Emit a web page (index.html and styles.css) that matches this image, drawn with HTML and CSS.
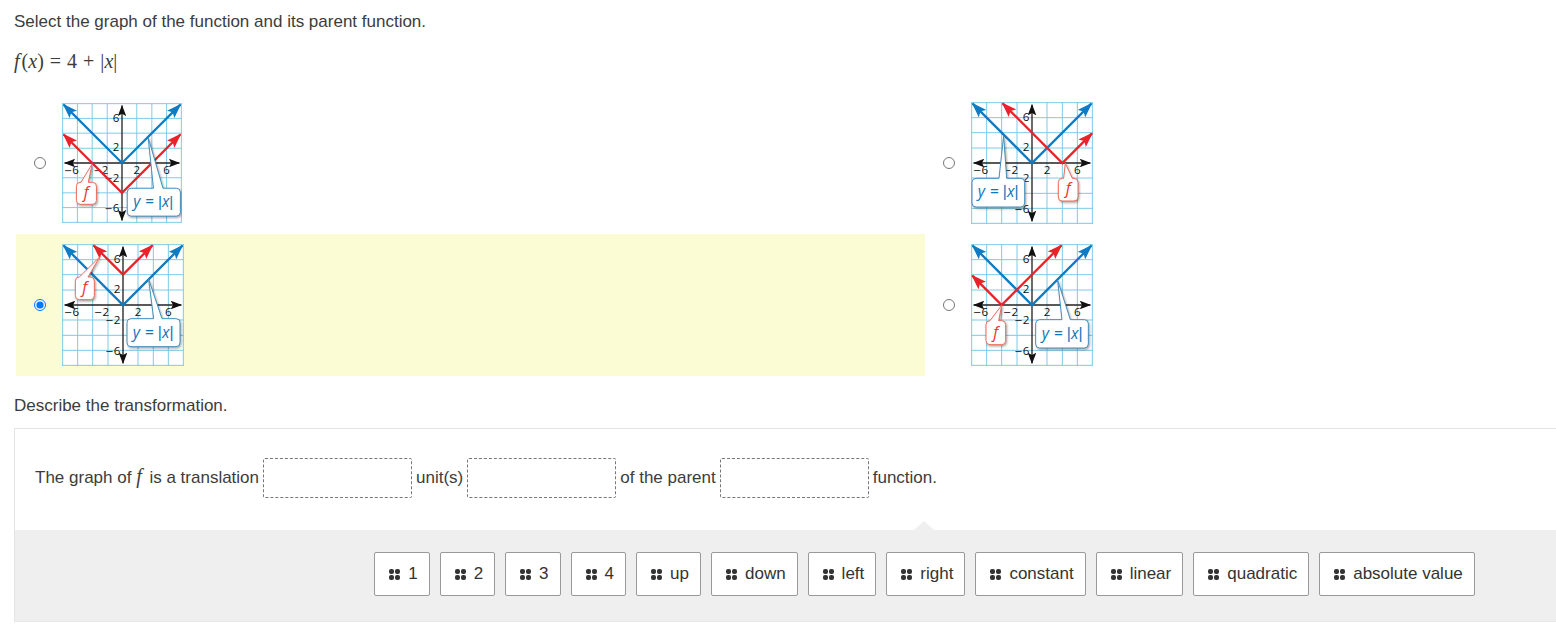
FILE: index.html
```
<!DOCTYPE html>
<html lang="en">
<head>
    <meta charset="UTF-8">
    <meta name="viewport" content="width=device-width, initial-scale=1.0">
    <title>Absolute Value Functions</title>
    <link rel="stylesheet" href="styles.css">
</head>
<body>
    <!-- Shared drawing parts for the graphs -->
    <svg class="defs" width="0" height="0" aria-hidden="true">
        <defs>
            <marker id="arrowBlack" viewBox="0 0 34 26" refX="32" refY="13" markerWidth="34" markerHeight="26" markerUnits="userSpaceOnUse" orient="auto-start-reverse">
                <path d="M0 0 L34 13 L0 26 L7 13 Z" fill="#111"/>
            </marker>
            <marker id="arrowBlue" viewBox="0 0 46 32" refX="42" refY="16" markerWidth="46" markerHeight="32" markerUnits="userSpaceOnUse" orient="auto-start-reverse">
                <path d="M0 0 L46 16 L0 32 L9 16 Z" fill="#0e7cc4"/>
            </marker>
            <marker id="arrowRed" viewBox="0 0 46 32" refX="42" refY="16" markerWidth="46" markerHeight="32" markerUnits="userSpaceOnUse" orient="auto-start-reverse">
                <path d="M0 0 L46 16 L0 32 L9 16 Z" fill="#e8232a"/>
            </marker>
            <symbol id="plane" viewBox="0 0 366 366">
                <rect x="0" y="0" width="366" height="366" fill="#fff"/>
                <path class="grid" d="M2 0V366 M47 0V366 M92 0V366 M138 0V366 M228 0V366 M274 0V366 M319 0V366 M364 0V366 M0 2H366 M0 47H366 M0 92H366 M0 138H366 M0 228H366 M0 274H366 M0 319H366 M0 364H366"/>
                <path class="axis" d="M8 183H358"/>
                <path class="axis" d="M183 8V358"/>
                <text class="tick" x="6" y="216"><tspan class="minus">−</tspan>6</text>
                <text class="tick" x="96" y="216"><tspan class="minus">−</tspan>2</text>
                <text class="tick" x="218" y="216">2</text>
                <text class="tick" x="309" y="216">6</text>
                <text class="tick end" x="175" y="57">6</text>
                <text class="tick end" x="175" y="147">2</text>
                <text class="tick end" x="175" y="240"><tspan class="minus">−</tspan>2</text>
                <text class="tick end" x="175" y="332"><tspan class="minus">−</tspan>6</text>
                <path class="parent-line" d="M5 5L183 183L361 5"/>
            </symbol>
        </defs>
    </svg>

    <main class="question">
        <p class="prompt">Select the graph of the function and its parent function.</p>
        <p class="equation"><i>f</i>(<i>x</i>)<span class="op">=</span>4<span class="op">+</span>|<i>x</i>|</p>

        <form class="choices">
            <div class="choice">
                <input type="radio" id="graphA" name="graph" value="a">
                <label for="graphA">
                    <svg class="graph small" viewBox="0 0 366 366" role="img" aria-label="f shifted down">
                        <use href="#plane"/>
                        <path class="f-line" d="M5 96L183 274L361 96"/>
                        <path class="callout red" d="M54 242H58L92 186L80 242H93Q105 242 105 254V297Q105 309 93 309H56Q44 309 44 297V254Q44 242 56 242Z"/>
                        <text class="callout-text red-text" x="66" y="290">f</text>
                        <path class="callout blue" d="M211 260H279L263 106L308 260H349Q361 260 361 272V333Q361 345 349 345H211Q199 345 199 333V272Q199 260 211 260Z"/>
                        <text class="callout-text blue-text" x="217" y="317">y<tspan class="upright" dx="15">=</tspan><tspan class="bar" dx="12">|</tspan>x<tspan class="bar">|</tspan></text>
                    </svg>
                </label>
            </div>

            <div class="choice">
                <input type="radio" id="graphB" name="graph" value="b">
                <label for="graphB">
                    <svg class="graph" viewBox="0 0 366 366" role="img" aria-label="f shifted right">
                        <use href="#plane"/>
                        <path class="f-line" d="M95 4L274 183L363 94"/>
                        <path class="callout red" d="M274 229H278L283 184L304 229H309Q321 229 321 241V285Q321 297 309 297H274Q262 297 262 285V241Q262 229 274 229Z"/>
                        <text class="callout-text red-text" x="284" y="277">f</text>
                        <path class="callout blue" d="M15 229H84L98 102L107 229H149Q161 229 161 241V303Q161 315 149 315H15Q3 315 3 303V241Q3 229 15 229Z"/>
                        <text class="callout-text blue-text" x="20" y="286">y<tspan class="upright" dx="15">=</tspan><tspan class="bar" dx="12">|</tspan>x<tspan class="bar">|</tspan></text>
                    </svg>
                </label>
            </div>

            <div class="choice">
                <input type="radio" id="graphC" name="graph" value="c" checked>
                <label for="graphC">
                    <svg class="graph" viewBox="0 0 366 366" role="img" aria-label="f shifted up">
                        <use href="#plane"/>
                        <path class="f-line" d="M95 4L183 92L271 4"/>
                        <path class="callout red" d="M52 99L113 39L78 99H85Q97 99 97 111V155Q97 167 85 167H52Q40 167 40 155V111Q40 99 52 99Z"/>
                        <text class="callout-text red-text" x="61" y="147">f</text>
                        <path class="callout blue" d="M207 224H275L260 106L300 224H342Q354 224 354 236V296Q354 308 342 308H207Q195 308 195 296V236Q195 224 207 224Z"/>
                        <text class="callout-text blue-text" x="212" y="281">y<tspan class="upright" dx="15">=</tspan><tspan class="bar" dx="12">|</tspan>x<tspan class="bar">|</tspan></text>
                    </svg>
                </label>
            </div>

            <div class="choice">
                <input type="radio" id="graphD" name="graph" value="d">
                <label for="graphD">
                    <svg class="graph" viewBox="0 0 366 366" role="img" aria-label="f shifted left">
                        <use href="#plane"/>
                        <path class="f-line" d="M4 95L92 183L271 4"/>
                        <path class="callout red" d="M57 230L92 184L83 230H92Q104 230 104 242V290Q104 302 92 302H57Q45 302 45 290V242Q45 230 57 230Z"/>
                        <text class="callout-text red-text" x="67" y="281">f</text>
                        <path class="callout blue" d="M206 227H273L260 109L298 227H340Q352 227 352 239V300Q352 312 340 312H206Q194 312 194 300V239Q194 227 206 227Z"/>
                        <text class="callout-text blue-text" x="212" y="285">y<tspan class="upright" dx="15">=</tspan><tspan class="bar" dx="12">|</tspan>x<tspan class="bar">|</tspan></text>
                    </svg>
                </label>
            </div>
        </form>

        <p class="prompt">Describe the transformation.</p>

        <section class="cloze">
            <div class="sentence">
                <span>The graph of <i class="math">f</i> is a translation</span>
                <span class="slot"></span>
                <span>unit(s)</span>
                <span class="slot"></span>
                <span>of the parent</span>
                <span class="slot"></span>
                <span>function.</span>
            </div>

            <!-- Draggable answers -->
            <div class="bank">
                <button type="button" draggable="true"><span class="grip"></span>1</button>
                <button type="button" draggable="true"><span class="grip"></span>2</button>
                <button type="button" draggable="true"><span class="grip"></span>3</button>
                <button type="button" draggable="true"><span class="grip"></span>4</button>
                <button type="button" draggable="true"><span class="grip"></span>up</button>
                <button type="button" draggable="true"><span class="grip"></span>down</button>
                <button type="button" draggable="true"><span class="grip"></span>left</button>
                <button type="button" draggable="true"><span class="grip"></span>right</button>
                <button type="button" draggable="true"><span class="grip"></span>constant</button>
                <button type="button" draggable="true"><span class="grip"></span>linear</button>
                <button type="button" draggable="true"><span class="grip"></span>quadratic</button>
                <button type="button" draggable="true"><span class="grip"></span>absolute value</button>
            </div>
        </section>
    </main>
</body>
</html>
```
FILE: styles.css
```
* {
    box-sizing: border-box;
}

body {
    margin: 0;
    font-family: "Liberation Sans", Arial, sans-serif;
    font-size: 17px;
    line-height: 20px;
    color: #3c3c3c;
    background-color: #fff;
}

.defs {
    position: absolute;
}

.question {
    padding: 12px 0 0 14px;
}

.prompt {
    margin: 0;
}

.equation {
    margin: 18px 0 20px;
    font-family: "Liberation Serif", "Times New Roman", serif;
    font-size: 20px;
    line-height: 22px;
}

.equation i:first-child {
    margin-right: 2px;
}

.op {
    margin: 0 6px;
}

/* Graph choices */
.choices {
    display: grid;
    grid-template-columns: 59fr 41fr;
    margin: 0 0 20px 2px;
}

.choice {
    display: flex;
    align-items: center;
    gap: 16px;
    height: 142px;
    padding-left: 18px;
}

.choice:has(input:checked) {
    background-color: #fcfcd4;
}

.choice input {
    width: 12px;
    height: 12px;
    margin: 0;
}

.graph {
    display: block;
    width: 122px;
    height: 122px;
}

.graph.small {
    width: 120px;
    height: 120px;
}

.grid {
    fill: none;
    stroke: #7ccbe6;
    stroke-width: 3;
}

.axis {
    stroke: #222;
    stroke-width: 4;
    marker-start: url(#arrowBlack);
    marker-end: url(#arrowBlack);
}

.parent-line, .f-line {
    fill: none;
    stroke-width: 7;
}

.parent-line {
    stroke: #0e7cc4;
    marker-start: url(#arrowBlue);
    marker-end: url(#arrowBlue);
}

.f-line {
    stroke: #e8232a;
    marker-start: url(#arrowRed);
    marker-end: url(#arrowRed);
}

.tick {
    font-family: "Open Sans", "Noto Sans", sans-serif;
    font-size: 35px;
    font-weight: 500;
    fill: #111;
}

.end {
    text-anchor: end;
}

.minus {
    font-family: "DejaVu Sans", sans-serif;
    font-size: 30px;
}

.callout {
    fill: #fff;
    stroke-width: 3;
    filter: drop-shadow(3px 4px 3px rgba(0, 0, 0, 0.35));
}

.red {
    stroke: #ee6a5c;
}

.blue {
    stroke: #3f8fc0;
}

.callout-text {
    font-family: "Open Sans", "Noto Sans", sans-serif;
    font-size: 47px;
    font-style: italic;
}

.upright {
    font-style: normal;
}

.bar {
    font-family: "Liberation Sans", Arial, sans-serif;
    font-style: normal;
}

.red-text {
    fill: #e8332a;
}

.blue-text {
    fill: #0e76b8;
}

/* Fill in the blanks */
.cloze {
    margin-top: 12px;
    border-top: 1px solid #e4e4e4;
    border-left: 1px solid #e4e4e4;
}

.sentence {
    display: flex;
    flex-wrap: wrap;
    align-items: center;
    gap: 4px;
    padding: 29px 20px 32px;
}

.math {
    margin-right: 3px;
    font-family: "Liberation Serif", "Times New Roman", serif;
    font-size: 20px;
    line-height: 0;
}

.slot {
    width: 149px;
    height: 40px;
    border: 1px dashed #777;
    border-radius: 2px;
}

.bank {
    position: relative;
    display: flex;
    flex-wrap: wrap;
    justify-content: center;
    gap: 10px;
    padding: 22px 22px 25px 300px;
    background-color: #efefef;
    border-bottom: 1px solid #e8e8e8;
}

.bank::before {
    content: "";
    position: absolute;
    left: 59%;
    top: -9px;
    margin-left: -10px;
    border: 10px solid transparent;
    border-top: 0;
    border-bottom: 9px solid #efefef;
}

.bank button {
    display: flex;
    align-items: center;
    height: 44px;
    padding: 0 11px 0 14px;
    font-family: inherit;
    font-size: 17px;
    color: #333;
    background-color: #fff;
    border: 1px solid #999;
    border-radius: 2px;
    cursor: grab;
}

/* four dots */
.grip {
    width: 5px;
    height: 5px;
    margin: 0 14px 5px 0;
    border-radius: 2px;
    background-color: #333;
    box-shadow: 6px 0 #333, 0 6px #333, 6px 6px #333;
}

@media (max-width: 1200px) {
    .bank {
        padding-left: 22px;
    }
}
```
